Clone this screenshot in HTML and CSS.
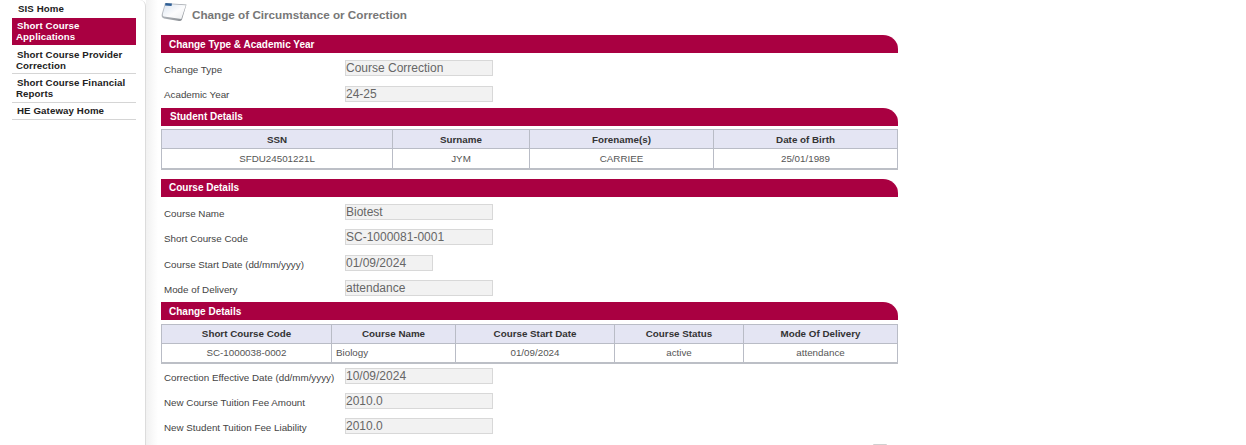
FILE: index.html
```html
<!DOCTYPE html>
<html lang="en">
<head>
<meta charset="utf-8">
<title>Change of Circumstance or Correction</title>
<link rel="stylesheet" href="styles.css">
</head>
<body>
<div class="page">
  <nav class="side">
    <a class="nav-item first">SIS Home</a>
    <a class="nav-item active">Short Course Applications</a>
    <a class="nav-item provider">Short Course Provider Correction</a>
    <a class="nav-item">Short Course Financial Reports</a>
    <a class="nav-item gateway">HE Gateway Home</a>
  </nav>
  <main class="main">
    <header class="title">
      <svg class="folder" width="26" height="22" viewBox="0 0 26 22">
        <defs>
          <linearGradient id="folderEdge" x1="0" y1="0" x2="1" y2="1">
            <stop offset="0" stop-color="#c9ced4"/>
            <stop offset="1" stop-color="#85898e"/>
          </linearGradient>
          <linearGradient id="folderFace" x1="0" y1="0" x2="1" y2="1">
            <stop offset="0" stop-color="#dbe5f1"/>
            <stop offset=".55" stop-color="#fcfcfd"/>
            <stop offset="1" stop-color="#eceef0"/>
          </linearGradient>
        </defs>
        <path d="M4 3 L25.500 4.500 L21 19.500 Q20 21.500 18 21 L3 18.500 Q0 17.500 .8 14 Z" fill="url(#folderEdge)"/>
        <path d="M4.600 4 L24.800 5.300 L20.300 19 L2.800 16.600 Q1.500 16 1.800 14 Z" fill="url(#folderFace)"/>
        <path d="M4.500 3 L11 3.500 L10.500 6 L4 5.500 Z" fill="#2f5f96"/>
      </svg>
      <h1>Change of Circumstance or Correction</h1>
    </header>

    <h2 class="bar">Change Type &amp; Academic Year</h2>
    <div class="row row-top high"><label>Change Type</label><span class="field">Course Correction</span></div>
    <div class="row row-wide higher"><label>Academic Year</label><span class="field">24-25</span></div>

    <h2 class="bar bar-tight bar-inset">Student Details</h2>
    <table class="grid student">
      <tr><th class="c1">SSN</th><th class="c2">Surname</th><th class="c3">Forename(s)</th><th>Date of Birth</th></tr>
      <tr><td>SFDU24501221L</td><td>JYM</td><td>CARRIEE</td><td>25/01/1989</td></tr>
    </table>

    <h2 class="bar bar-gap">Course Details</h2>
    <div class="row row-top"><label>Course Name</label><span class="field">Biotest</span></div>
    <div class="row"><label>Short Course Code</label><span class="field">SC-1000081-0001</span></div>
    <div class="row row-wide"><label>Course Start Date (dd/mm/yyyy)</label><span class="field short">01/09/2024</span></div>
    <div class="row"><label>Mode of Delivery</label><span class="field">attendance</span></div>

    <h2 class="bar bar-tight">Change Details</h2>
    <table class="grid change">
      <tr><th class="d1">Short Course Code</th><th class="d2">Course Name</th><th class="d3">Course Start Date</th><th class="d4">Course Status</th><th>Mode Of Delivery</th></tr>
      <tr><td>SC-1000038-0002</td><td class="left">Biology</td><td>01/09/2024</td><td>active</td><td>attendance</td></tr>
    </table>
    <div class="row row-first high"><label>Correction Effective Date (dd/mm/yyyy)</label><span class="field">10/09/2024</span></div>
    <div class="row mid"><label>New Course Tuition Fee Amount</label><span class="field">2010.0</span></div>
    <div class="row mid"><label>New Student Tuition Fee Liability</label><span class="field">2010.0</span></div>
    <div class="next-edge"></div>
  </main>
</div>
</body>
</html>
```

FILE: styles.css
```css
* { box-sizing: border-box; }
html, body { margin: 0; height: 100%; overflow: hidden; background: #fff; }
body { font-family: "Liberation Sans", Arial, sans-serif; color: #333; }
.page { display: flex; height: 445px; align-items: flex-start; }

.side { width: 146px; flex: none; height: 445px; padding: 0 9px 0 12px; border-right: 1px solid #dcdcdc; border-top-right-radius: 6px; }
.nav-item { display: block; font-size: 9.7px; line-height: 11px; font-weight: bold; color: #222; padding: 3px 4px; border-bottom: 1px solid #d5d5d5; letter-spacing: .1px; text-indent: 1px; }
.nav-item.first { height: 18px; padding: 3px 5px 0; border-bottom: 0; }
.nav-item.active { background: #a90041; color: #fff; padding: 2px 4px 3px; border-bottom: 0; }
.nav-item.provider { padding: 4px 4px 2px; }
.nav-item.gateway { padding: 2px 4px 3px; }

.main { width: 752px; flex: none; padding: 0 0 0 15px; background: linear-gradient(90deg, #f1f1f1 0, #fff 12px); height: 445px; }

.title { display: flex; align-items: center; height: 35px; padding-bottom: 6px; }
.folder { flex: none; align-self: flex-start; }
h1 { margin: 0 0 0 5px; font-size: 11.7px; font-weight: bold; color: #777; }

.bar { margin: 0; height: 18px; width: 737px; background: #a90041; color: #fff; font-size: 10px; line-height: 19px; font-weight: bold; padding-left: 8px; border-top-right-radius: 15px 14px; }
.bar-gap { margin-top: 9px; line-height: 18px; }
.bar-tight { margin-top: 6px; }
.bar-inset { padding-left: 9px; line-height: 18px; }

.row { display: flex; align-items: center; height: 16px; margin-top: 9px; padding-left: 3px; }
.row-top { margin-top: 7px; }
.row-wide { margin-top: 10px; }
.row-first { margin-top: 4px; }
label { width: 181px; flex: none; font-size: 9.8px; color: #444; white-space: nowrap; padding-top: 4px; }
.mid label { padding-top: 3px; }
.high label { padding-top: 2px; }
.higher label { padding-top: 0; }
.field { display: block; width: 148px; height: 16px; background: #f2f2f2; border: 1px solid #d8d8d8; color: #666; font-size: 12px; line-height: 14px; }
.field.short { width: 88px; }

.grid { border-collapse: collapse; table-layout: fixed; width: 737px; margin-top: 3px; border: 1px solid #b9bcc6; border-bottom: 2px solid #bcbfc6; }
.change { margin-top: 4px; }
.grid th { background: #e4e5f3; height: 19px; font-size: 9.8px; font-weight: bold; color: #333; border: 1px solid #b9bcc6; padding: 0; }
.grid td { height: 20px; font-size: 9.8px; color: #555; text-align: center; border: 1px solid #b9bcc6; padding: 0; background: #fff; }
.grid td.left { text-align: left; padding-left: 4px; }
.c1 { width: 231px; } .c2 { width: 137px; } .c3 { width: 184px; }
.d1 { width: 170px; } .d2 { width: 124px; } .d3 { width: 159px; } .d4 { width: 129px; }

.next-edge { width: 14px; height: 1px; margin: 10px 0 0 712px; background: #d0d0d0; border-radius: 7px 7px 0 0; }
```
